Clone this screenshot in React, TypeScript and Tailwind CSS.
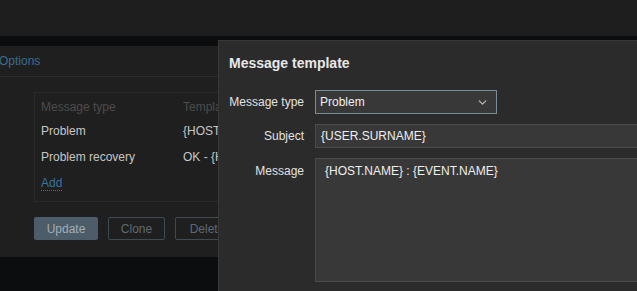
import { ChevronDown } from "lucide-react";

const font = { fontFamily: '"Liberation Sans", Arial, sans-serif' };

function TemplateRow({ type, template }: { type: string; template: string }) {
  return (
    <div className="flex h-[26px] items-center text-[12px] text-[#c6c6c6]">
      <span className="w-[142px]">{type}</span>
      <span className="whitespace-nowrap">{template}</span>
    </div>
  );
}

export default function App() {
  return (
    <div className="relative w-[637px] h-[291px] overflow-hidden bg-[#0c0d0f]" style={font}>
      {/* page behind the dialog */}
      <div className="h-[36px] bg-[#1e1e1e]" />
      <div className="h-[10px] bg-[#0c0d0f]" />
      <div className="h-[211px] bg-[#1f1f1f] flex flex-col">
        <div className="h-[31px] border-b border-[#2c2c2c] flex items-center">
          <span className="text-[12px] text-[#3a6d8f] -ml-[1px]">Options</span>
        </div>
        <div className="ml-[34px] mt-[15px] h-[110px] border border-[#2a2a2a] pl-[6px] pt-[3px]">
          <div className="flex h-[22px] items-center text-[12px] text-[#4c4c4c]">
            <span className="w-[142px]">Message type</span>
            <span>Template</span>
          </div>
          <TemplateRow type="Problem" template="{HOST.NAME}" />
          <TemplateRow type="Problem recovery" template="OK - {HOST.NAME}" />
          <div className="flex h-[27px] items-center">
            <span className="text-[12px] text-[#3873a0] border-b border-dotted border-[#3873a0] leading-[14px]">
              Add
            </span>
          </div>
        </div>
        <div className="ml-[34px] mt-[15px] flex gap-[10px] text-[12px]">
          <button className="h-[23px] w-[64px] bg-[#4c5c68] text-[#a3adb5] rounded-[2px]">Update</button>
          <button className="h-[23px] w-[57px] border border-[#3f4b53] text-[#5e6a72] rounded-[2px]">Clone</button>
          <button className="h-[23px] w-[64px] border border-[#3f4b53] text-[#5e6a72] rounded-[2px]">Delete</button>
        </div>
      </div>

      {/* dialog overlay */}
      <div className="absolute left-[218px] top-[40px] w-[440px] h-[280px] bg-[#2b2b2b] border border-[#383838] pl-[10px] pt-[12px]">
        <h2 className="text-[14px] font-bold text-[#e8e8e8] leading-[20px]">Message template</h2>
        <div className="mt-[17px] flex flex-col gap-[10px] text-[12px]">
          <div className="flex items-center gap-[11px]">
            <label className="w-[75px] text-right text-[#e2e2e2]">Message type</label>
            <div className="h-[24px] w-[182px] border border-[#768d99] bg-[#383838] flex items-center justify-between pl-[4px] pr-[7px] text-[#efefef]">
              <span>Problem</span>
              <ChevronDown className="w-[13px] h-[13px] text-[#b5b5b5]" strokeWidth={2.5} />
            </div>
          </div>
          <div className="flex items-center gap-[11px]">
            <label className="w-[75px] text-right text-[#e2e2e2]">Subject</label>
            <div className="h-[24px] flex-1 border border-[#4b4b4b] bg-[#383838] flex items-center pl-[5px] text-[#efefef]">
              {"{USER.SURNAME}"}
            </div>
          </div>
          <div className="flex items-start gap-[11px]">
            <label className="w-[75px] text-right text-[#e2e2e2] mt-[4px]">Message</label>
            <div className="h-[124px] flex-1 border border-[#4b4b4b] bg-[#383838] pl-[9px] pt-[3px] text-[#efefef]">
              {"{HOST.NAME} : {EVENT.NAME}"}
            </div>
          </div>
        </div>
      </div>
    </div>
  );
}
